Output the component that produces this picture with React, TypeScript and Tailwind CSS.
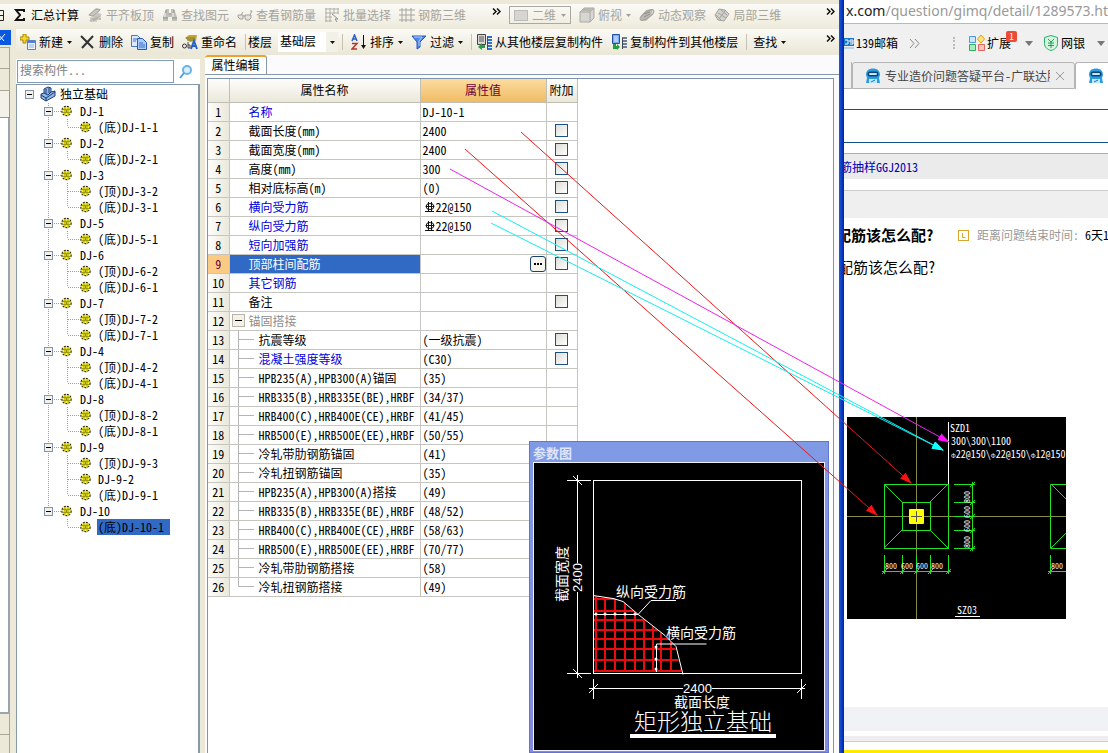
import { ReactNode } from "react";
import clsx from "clsx";

type TreeLeaf = string;
type TreeGroup = { name: string; children: TreeLeaf[] };

const TREE: TreeGroup[] = [
  { name: "DJ-1", children: ["(底)DJ-1-1"] },
  { name: "DJ-2", children: ["(底)DJ-2-1"] },
  { name: "DJ-3", children: ["(顶)DJ-3-2", "(底)DJ-3-1"] },
  { name: "DJ-5", children: ["(底)DJ-5-1"] },
  { name: "DJ-6", children: ["(顶)DJ-6-2", "(底)DJ-6-1"] },
  { name: "DJ-7", children: ["(顶)DJ-7-2", "(底)DJ-7-1"] },
  { name: "DJ-4", children: ["(顶)DJ-4-2", "(底)DJ-4-1"] },
  { name: "DJ-8", children: ["(顶)DJ-8-2", "(底)DJ-8-1"] },
  { name: "DJ-9", children: ["(顶)DJ-9-3", "DJ-9-2", "(底)DJ-9-1"] },
  { name: "DJ-10", children: ["(底)DJ-10-1"] },
];
const SELECTED_LEAF = "(底)DJ-10-1";

type PropertyRow = {
  name: string;
  value?: string;
  rebar?: boolean;
  blue?: boolean;
  check?: boolean;
  group?: boolean;
  nested?: boolean;
};

const ROWS: PropertyRow[] = [
  { name: "名称", value: "DJ-10-1", blue: true },
  { name: "截面长度(mm)", value: "2400", check: true },
  { name: "截面宽度(mm)", value: "2400", check: true },
  { name: "高度(mm)", value: "300", check: true },
  { name: "相对底标高(m)", value: "(0)", check: true },
  { name: "横向受力筋", value: "22@150", rebar: true, blue: true, check: true },
  { name: "纵向受力筋", value: "22@150", rebar: true, blue: true, check: true },
  { name: "短向加强筋", blue: true, check: true },
  { name: "顶部柱间配筋", blue: true, check: true },
  { name: "其它钢筋", blue: true },
  { name: "备注", check: true },
  { name: "锚固搭接", group: true },
  { name: "抗震等级", value: "(一级抗震)", nested: true, check: true },
  { name: "混凝土强度等级", value: "(C30)", nested: true, blue: true, check: true },
  { name: "HPB235(A),HPB300(A)锚固", value: "(35)", nested: true },
  { name: "HRB335(B),HRB335E(BE),HRBF", value: "(34/37)", nested: true },
  { name: "HRB400(C),HRB400E(CE),HRBF", value: "(41/45)", nested: true },
  { name: "HRB500(E),HRB500E(EE),HRBF", value: "(50/55)", nested: true },
  { name: "冷轧带肋钢筋锚固", value: "(41)", nested: true },
  { name: "冷轧扭钢筋锚固", value: "(35)", nested: true },
  { name: "HPB235(A),HPB300(A)搭接", value: "(49)", nested: true },
  { name: "HRB335(B),HRB335E(BE),HRBF", value: "(48/52)", nested: true },
  { name: "HRB400(C),HRB400E(CE),HRBF", value: "(58/63)", nested: true },
  { name: "HRB500(E),HRB500E(EE),HRBF", value: "(70/77)", nested: true },
  { name: "冷轧带肋钢筋搭接", value: "(58)", nested: true },
  { name: "冷轧扭钢筋搭接", value: "(49)", nested: true },
];
const SELECTED_ROW = 8;

function Icon({ children }: { children: ReactNode }) {
  return (
    <svg width="16" height="16" viewBox="0 0 16 16" fill="none" className="shrink-0" aria-hidden="true">
      {children}
    </svg>
  );
}

const SlabIcon = () => (
  <Icon>
    <path d="M1 8 9 1l5 1-3 4 4 1-8 8-5-1 4-4z" fill="#c9c8c1" />
    <path d="M2 8l7-6 4 1-7 6zM5 12h9M6 14l7-5" stroke="#a6a59e" />
    <path d="M4 10v5M9 9v6M13 8v5" stroke="#b4b3ac" />
  </Icon>
);
const BinocularsIcon = () => (
  <Icon>
    <path d="M4 2h3v4h2V2h3l3 8v4h-5v-4H6v4H1v-4z" fill="#bfbeb8" />
    <path d="M4 3v3M12 3v3M1 11h5M10 11h5M7 7h2" stroke="#94938d" />
    <path d="M3 6v4M11 6v4" stroke="#f4f3ee" />
  </Icon>
);
const GlassesIcon = () => (
  <Icon>
    <path d="M1 8h5v4H3l-2-2zM8 8h6v3l-2 2H9l-1-2z" fill="#e3e2dc" stroke="#a3a29c" />
    <path d="M6 9h2M13 8l2-4h-2M4 8l2-3" stroke="#a3a29c" />
  </Icon>
);
const BatchIcon = () => (
  <Icon>
    <path d="M1 2h14M1 6h14M1 10h7M1 14h7M2 1v14M6 1v14M10 1v6M14 1v6" stroke="#b0afa8" />
    <path d="M8 7l6 5-3 0 2 3" stroke="#8f8e88" />
  </Icon>
);
const GridIcon = () => (
  <Icon>
    <path d="M0 3h16M0 8h16M0 13h16M3 1v14M7 1v14M12 1v14" stroke="#a5a49e" />
  </Icon>
);
const CubeIcon = () => (
  <Icon>
    <path d="M1 5l4-4h10v10l-4 4H1z" fill="#d7d6d0" stroke="#a9a8a2" />
    <path d="M1 5h10v10M11 5l4-4" stroke="#a9a8a2" />
    <path d="M2 4l3-3h9l-3 3z" fill="#b7b6b0" />
  </Icon>
);
const OrbitIcon = () => (
  <Icon>
    <path d="M2 9l5-6 7-1-2 7-5 5-5-1z" fill="#bbbab4" />
    <ellipse cx="8" cy="8" rx="8" ry="3" transform="rotate(-35 8 8)" stroke="#a2a19b" />
    <path d="M5 7l6-2M5 10l6-3" stroke="#8f8e88" />
  </Icon>
);
const PartIcon = () => (
  <Icon>
    <path d="M1 8l4-6 6 1 4 4-5 7-6-1z" fill="#d2d1cb" stroke="#a4a39d" />
    <path d="M4 6l8 5M7 3l6 5M5 12l6-8M2 8l5 5" stroke="#a4a39d" />
  </Icon>
);
const NewIcon = () => (
  <Icon>
    <path d="M3 0h3v3h3v3H6v3H3V6H0V3h3z" fill="#f7d62c" stroke="#a98508" />
    <path d="M7.500 6.500h8v9h-8z" fill="#eaf3ff" stroke="#5b7fc0" />
    <path d="M8 7h7v2H8z" fill="#4f7fe0" />
    <path d="M9 11h5M9 13h5" stroke="#8fb0e4" />
  </Icon>
);
const DeleteIcon = () => (
  <Icon>
    <path d="M1 2l12 12M13 2L2 14" stroke="#333" strokeWidth="2" />
  </Icon>
);
const CopyIcon = () => (
  <Icon>
    <path d="M.5 1.500h6l3 3v8h-9z" fill="#dceaff" stroke="#4b74c4" />
    <path d="M6.500 4.500h5l4 4v7h-9z" fill="#a9ccff" stroke="#2c58b4" />
    <path d="M2 5h4M2 7h3M8 9h4M8 11h6M8 13h6" stroke="#3f6cc0" />
  </Icon>
);
const RenameIcon = () => (
  <Icon>
    <path d="M3 4l4-3h8l-1 6-6 1z" fill="#c9a13b" />
    <path d="M4 4h9M5 6h8" stroke="#6f8a36" />
    <circle cx="2.500" cy="12" r="2" stroke="#333" />
    <path d="M6 8v6h2v-3H6" stroke="#444" />
    <path d="M9 15l3-8 3 8M10 12h4" stroke="#2560c8" strokeWidth="2" />
  </Icon>
);
const SortIcon = () => (
  <Icon>
    <path d="M1 7l2.500-6L6 7M2 5h3" stroke="#2a5fc4" strokeWidth="1.500" />
    <path d="M1 9.500h5L1 15h5" stroke="#b3362c" strokeWidth="1.500" />
    <path d="M12.500 1v13" stroke="#111" />
    <path d="M10 11h5l-2.500 4z" fill="#111" />
  </Icon>
);
const FilterIcon = () => (
  <Icon>
    <path d="M1 2h14l-6 6v5l-3 2V8z" fill="#4d86ea" stroke="#2b59c0" />
    <path d="M3 3h8L8 7v5" stroke="#b7d2ff" />
  </Icon>
);
const CopyFromIcon = () => (
  <Icon>
    <path d="M1.500.5h8v10h-8z" fill="#d9d9d9" stroke="#444" />
    <path d="M3 3h5M3 5h5M3 7h5" stroke="#555" />
    <path d="M2 13l4-4v2h3v3H6v2z" fill="#27a043" />
    <path d="M11 3h5M11 6h5M11 9h5M11 12h5M11 15h5" stroke="#2f71cc" strokeWidth="2" />
    <path d="M11.500 3v12" stroke="#1c4f9c" />
  </Icon>
);
const CopyToIcon = () => (
  <Icon>
    <path d="M1.500.5h7v9h-7z" fill="#78a9f2" stroke="#2350a8" />
    <path d="M3 3h4M3 5h4M3 7h4" stroke="#e8f1ff" />
    <path d="M2 10v5h4v1l3-3-3-3v2H5v-2z" fill="#21a03e" />
    <path d="M11 4h5M11 7h5M11 10h5M11 13h5" stroke="#6f7f97" strokeWidth="2" />
    <path d="M11.500 4v11" stroke="#3a465a" />
  </Icon>
);

function Caret({ muted }: { muted?: boolean }) {
  return (
    <svg width="5" height="3" viewBox="0 0 5 3" className="ml-px shrink-0" aria-hidden="true">
      <path d="M0 0h5L2.500 3z" fill={muted ? "#a0a09a" : "#111"} />
    </svg>
  );
}

type ToolButtonProps = {
  icon?: ReactNode;
  label: string;
  disabled?: boolean;
  caret?: boolean;
};
function ToolButton({ icon, label, disabled, caret }: ToolButtonProps) {
  return (
    <button
      type="button"
      disabled={disabled}
      className="flex shrink-0 items-center gap-[3px] whitespace-nowrap text-black disabled:text-[#a5a49d]"
    >
      {icon}
      {label}
      {caret && <Caret muted={disabled} />}
    </button>
  );
}

const Separator = () => <span className="h-4 w-px shrink-0 bg-[#c5c2b4]" />;

function Overflow({ className }: { className?: string }) {
  return (
    <button type="button" aria-label="更多" className={clsx("shrink-0", className)}>
      <svg width="9" height="7" viewBox="0 0 9 7" fill="none" aria-hidden="true">
        <path d="M1 .5l3 3-3 3M5 .5l3 3-3 3" stroke="#111" strokeWidth="1.500" />
      </svg>
    </button>
  );
}

function MainToolbar() {
  return (
    <div className="flex h-7 items-center gap-2 overflow-hidden border-t-4 border-[#ece9d8] bg-linear-to-b from-[#fbfaf6] to-[#eeebdd] pb-[2px] pr-1">
      <svg width="4" height="11" viewBox="0 0 4 11" fill="none" aria-hidden="true">
        <path d="M0 .5h3.500v10H0M0 5.500h3" stroke="#222" />
      </svg>
      <ToolButton
        icon={
          <Icon>
            <path d="M12 5V3H4l4 5-4 5h8v-2" stroke="#111" strokeWidth="2" />
          </Icon>
        }
        label="汇总计算"
      />
      <ToolButton icon={<SlabIcon />} label="平齐板顶" disabled />
      <ToolButton icon={<BinocularsIcon />} label="查找图元" disabled />
      <ToolButton icon={<GlassesIcon />} label="查看钢筋量" disabled />
      <ToolButton icon={<BatchIcon />} label="批量选择" disabled />
      <ToolButton icon={<GridIcon />} label="钢筋三维" disabled />
      <Overflow className="ml-[18px] pb-2" />
      <button
        type="button"
        disabled
        className="flex h-[18px] w-[62px] shrink-0 items-center justify-between border border-[#aaa99f] px-1 text-[#a5a49d]"
      >
        <span className="h-[11px] w-[14px] border border-[#bbb] bg-[#d6d5cf]" />
        二维
        <Caret muted />
      </button>
      <ToolButton icon={<CubeIcon />} label="俯视" disabled caret />
      <ToolButton icon={<OrbitIcon />} label="动态观察" disabled />
      <ToolButton icon={<PartIcon />} label="局部三维" disabled />
      <Overflow className="ml-auto pb-2" />
    </div>
  );
}

function ComponentToolbar() {
  return (
    <div className="flex h-[26px] shrink-0 items-center gap-2 overflow-hidden bg-linear-to-b from-[#fbfaf6] to-[#eae7d6] pl-1 pr-1">
      <ToolButton icon={<NewIcon />} label="新建" caret />
      <ToolButton icon={<DeleteIcon />} label="删除" />
      <ToolButton icon={<CopyIcon />} label="复制" />
      <ToolButton icon={<RenameIcon />} label="重命名" />
      <div className="flex shrink-0 items-center gap-[2px]">
        <Separator />
        <label htmlFor="floor">楼层</label>
        <div className="relative ml-1 flex items-center">
          <select id="floor" className="h-5 w-[60px] appearance-none bg-white pl-[2px] pb-[2px] outline-none">
            <option>基础层</option>
          </select>
          <span className="pointer-events-none absolute right-0 flex h-5 w-3 items-center bg-[#f3f1e7] pl-[3px]">
            <Caret />
          </span>
        </div>
        <span className="ml-[2px] flex">
          <Separator />
        </span>
      </div>
      <ToolButton icon={<SortIcon />} label="排序" caret />
      <ToolButton icon={<FilterIcon />} label="过滤" caret />
      <div className="flex shrink-0 items-center gap-1">
        <Separator />
        <ToolButton icon={<CopyFromIcon />} label="从其他楼层复制构件" />
      </div>
      <ToolButton icon={<CopyToIcon />} label="复制构件到其他楼层" />
      <div className="flex shrink-0 items-center gap-[6px]">
        <Separator />
        <ToolButton label="查找" caret />
      </div>
      <Overflow className="ml-auto pb-2" />
    </div>
  );
}

function GearIcon() {
  return (
    <svg width="11" height="12" viewBox="0 0 11 12" fill="none" className="shrink-0" aria-hidden="true">
      <circle cx="5.500" cy="6" r="4.500" stroke="#2e2c00" strokeWidth="1.500" strokeDasharray="2 1" />
      <circle cx="5.500" cy="6" r="4" fill="#f4f020" />
      <path d="M4 2.500v7M7 2.500v7M2 4.500h7M2 7.500h7" stroke="#85800a" strokeWidth=".7" />
      <path d="M5 5.500h1v1H5z" fill="#222" />
    </svg>
  );
}

function ToggleBox({ x, y }: { x: number; y: number }) {
  return (
    <g>
      <rect x={x + 0.5} y={y + 0.5} width="8" height="8" fill="#f3f1ec" stroke="#8494a6" />
      <path d={`M${x + 2} ${y + 4.5}h5`} stroke="#000" />
    </g>
  );
}

function ComponentTree() {
  return (
    <ul className="flex-1 overflow-hidden border-l border-t border-r-2 border-[#8798a6] bg-white">
      <li>
        <div className="flex h-[18px] items-center pl-2">
          <svg width="9" height="9" aria-hidden="true">
            <ToggleBox x={0} y={0} />
          </svg>
          <svg width="16" height="16" viewBox="0 0 16 16" fill="none" className="ml-[6px]" aria-hidden="true">
            <path d="M1 8l3-1V3l4-2 3 1v4l4-1v5l-9 5-5-3z" fill="#8fb7e8" stroke="#1d3c74" />
            <path d="M4 7l4 2 3-3M6 3v5M1 9l5 3 9-6M6 12v3M9 2v5" stroke="#1d3c74" />
          </svg>
          <span className="ml-1">独立基础</span>
        </div>
        <ul>
          {TREE.map((group, g) => {
            const lastGroup = g === TREE.length - 1;
            return (
              <li key={group.name}>
                <div className="flex h-4 items-center pl-5">
                  <svg width="24" height="16" fill="none" aria-hidden="true">
                    <path
                      d={lastGroup ? "M11.500 0v8M17 8.500h7" : "M11.500 0v16M17 8.500h7"}
                      stroke="#a0a0a0"
                      strokeDasharray="1 1"
                    />
                    <ToggleBox x={7} y={4} />
                  </svg>
                  <GearIcon />
                  <span className="ml-2">{group.name}</span>
                </div>
                <ul>
                  {group.children.map((leaf, i) => (
                    <li key={leaf} className="flex h-4 items-center pl-5">
                      <svg width="43" height="16" fill="none" aria-hidden="true">
                        <path
                          d={clsx(
                            !lastGroup && "M11.500 0v16",
                            i === group.children.length - 1 ? "M30.500 0v8" : "M30.500 0v16",
                            "M31 8.500h11"
                          )}
                          stroke="#a0a0a0"
                          strokeDasharray="1 1"
                        />
                      </svg>
                      <GearIcon />
                      <span
                        className={clsx(
                          "ml-[6px] h-4 pl-px",
                          leaf === SELECTED_LEAF && "bg-[#316ac5] pr-[6px]"
                        )}
                      >
                        {leaf}
                      </span>
                    </li>
                  ))}
                </ul>
              </li>
            );
          })}
        </ul>
      </li>
    </ul>
  );
}

function RebarMark() {
  return (
    <svg width="12" height="12" viewBox="0 0 12 12" fill="none" className="ml-px shrink-0" aria-label="三级钢">
      <ellipse cx="6" cy="5.500" rx="4" ry="3" stroke="#111" />
      <path d="M4.500 1v9M7.500 1v9M1 10.500h9M2 5.500h8" stroke="#111" />
    </svg>
  );
}

function NameCell({ row, last }: { row: PropertyRow; last: boolean }) {
  if (row.group) {
    return (
      <div className="flex h-[18px] items-center pl-[2px]">
        <button
          type="button"
          aria-label="折叠"
          className="flex h-[13px] w-[13px] items-center justify-center border border-[#b8b5a8] bg-[#f4f2e8]"
        >
          <span className="h-px w-[7px] bg-black" />
        </button>
        <span className="ml-1 text-[#8d8d8d]">{row.name}</span>
      </div>
    );
  }
  return (
    <div className={clsx("flex h-[18px] items-center overflow-hidden whitespace-nowrap", !row.nested && "pl-[19px]")}>
      {row.nested && (
        <svg width="29" height="19" fill="none" className="shrink-0" aria-hidden="true">
          <path d={last ? "M8.500 0v10M8 9.500h16" : "M8.500 0v19M8 9.500h16"} stroke="#b5b5b5" />
        </svg>
      )}
      {row.name}
    </div>
  );
}

function PropertyTable() {
  return (
    <table className="w-[369px] table-fixed border-collapse">
      <colgroup>
        <col className="w-[21px]" />
        <col className="w-[191px]" />
        <col className="w-[126px]" />
        <col className="w-[31px]" />
      </colgroup>
      <thead>
        <tr className="h-[23px] bg-linear-to-b from-[#fdfdfa] to-[#ebe8da]">
          <th className="border-b border-r border-[#c0bfb6]" />
          <th className="border-b border-r border-[#c0bfb6] p-0 font-normal">属性名称</th>
          <th className="border-b border-r border-[#c0bfb6] bg-linear-to-b from-[#fbdc9f] to-[#f0bb62] p-0 font-normal text-[#6e0038]">
            属性值
          </th>
          <th className="whitespace-nowrap border-b border-r border-[#c0bfb6] p-0 font-normal">附加</th>
        </tr>
      </thead>
      <tbody>
        {ROWS.map((row, i) => {
          const selected = i === SELECTED_ROW;
          return (
            <tr key={i} className="h-[19px]">
              <td
                className={clsx(
                  "border-b border-r border-[#c6c5c0] p-0 text-center",
                  selected
                    ? "bg-[#fbcb84] text-[#6e0038]"
                    : "bg-linear-to-r from-[#fdfdfb] to-[#ebe8da]"
                )}
              >
                {i + 1}
              </td>
              <td
                className={clsx(
                  "border-b border-r border-[#c6c5c0] p-0",
                  selected ? "bg-[#316ac5] text-white" : row.blue && "text-[#0000d8]"
                )}
              >
                <NameCell row={row} last={i === ROWS.length - 1} />
              </td>
              <td className="border-b border-r border-[#c6c5c0] p-0">
                <div className="flex h-[18px] items-center pl-[2px]">
                  {row.rebar && <RebarMark />}
                  {row.value}
                  {selected && (
                    <button
                      type="button"
                      aria-label="编辑"
                      className="ml-auto flex h-4 w-4 items-center justify-center gap-px rounded-[3px] border border-[#1c3f6e] bg-[#f6f5f0]"
                    >
                      <span className="h-[2px] w-[2px] bg-black" />
                      <span className="h-[2px] w-[2px] bg-black" />
                      <span className="h-[2px] w-[2px] bg-black" />
                    </button>
                  )}
                </div>
              </td>
              <td className="border-b border-r border-[#c6c5c0] p-0">
                {row.check && (
                  <input
                    type="checkbox"
                    aria-label={`附加 ${row.name}`}
                    className="mx-auto block h-[13px] w-[13px] appearance-none border border-[#1c5180] bg-linear-to-br from-[#dcdcd7] to-white"
                  />
                )}
              </td>
            </tr>
          );
        })}
      </tbody>
    </table>
  );
}

// rebar mesh clipped by the break line of the footing
function FootingDrawing() {
  const columns = [62, 71, 81, 91, 101, 110, 119, 127, 137, 147];
  const rows = [136, 148, 157, 167, 176, 186, 197, 208];
  return (
    <svg
      width="290"
      height="287"
      viewBox="0 0 290 287"
      fill="none"
      className="[font-family:'Noto_Sans_CJK_SC',sans-serif]"
    >
      <rect width="290" height="287" fill="#000" />
      <clipPath id="mesh">
        <path d="M59 133l20 2 10 3 14 13 28 22 10 10 7 29H59z" />
      </clipPath>
      <g stroke="#e80c0c" strokeWidth="2" clipPath="url(#mesh)">
        {columns.map((x) => (
          <path key={x} d={`M${x} 132v77`} />
        ))}
        {rows.map((y) => (
          <path key={y} d={`M60 ${y}h90`} />
        ))}
      </g>
      <g stroke="#fff">
        <rect x="59.500" y="17.500" width="208" height="193" />
        <path d="M59 132.500l20 3 10 3 14 12 28 22 11 11 7 28" />
        <path d="M33 17.500h24M33 210.500h24M43.500 12v88M43.500 129v86M39 13l9 9M39 206l9 9" />
        <path d="M59.500 216v20M267.500 216v20M55 225.500h94M178 225.500h93M55 230l9-9M263 230l9-9" />
        <path d="M59 151.500h45l13-14h25M122.500 209v-28h50" />
      </g>
      <g fill="#fff">
        {[62, 71, 81, 91, 101].map((x) => (
          <circle key={x} cx={x} cy="151" r="1.500" />
        ))}
        <circle cx="122" cy="184" r="1.500" />
        <circle cx="122" cy="196" r="1.500" />
        <circle cx="122" cy="206" r="1.500" />
        <text x="82" y="134" fontSize="14">纵向受力筋</text>
        <text x="132" y="175" fontSize="14">横向受力筋</text>
        <text x="149" y="230" fontSize="13" className="[font-family:'Liberation_Sans',sans-serif]">2400</text>
        <text x="140" y="244" fontSize="14">截面长度</text>
        <text x="100" y="267" fontSize="23" fontWeight="300">矩形独立基础</text>
        <text transform="translate(33 139) rotate(-90)" fontSize="14">截面宽度</text>
        <text
          transform="translate(48 129) rotate(-90)"
          fontSize="13"
          className="[font-family:'Liberation_Sans',sans-serif]"
        >
          2400
        </text>
        <rect x="96" y="271" width="146" height="4" />
      </g>
    </svg>
  );
}

function ParameterWindow() {
  return (
    <section className="absolute bottom-0 right-[10px] flex w-[300px] flex-col bg-linear-to-b from-[#7f9ae6] to-[#8389dc] px-1 pb-[2px] shadow-[inset_0_0_0_1px_#6673cf]">
      <h2 className="h-[21px] pt-1 text-[13px] font-bold leading-4 text-[#dfe6fb]">参数图</h2>
      <div className="border border-[#f0f0ff]">
        <FootingDrawing />
      </div>
    </section>
  );
}

function LeftDock() {
  return (
    <div className="flex w-4 shrink-0 flex-col bg-[#ece9d8] pr-1">
      <button type="button" aria-label="关闭" className="mt-[2px] h-[15px] w-[11px] bg-[#0a57e0]">
        <svg width="11" height="15" viewBox="0 0 11 15" fill="none" aria-hidden="true">
          <path d="M-2 4l6 7M5 4l-6 7" stroke="#fff" />
        </svg>
      </button>
      <div className="mt-[2px] h-[22px] w-[10px] border-b border-r border-t border-[#a9a798]" />
      <div className="h-[22px] w-[10px] border-b border-r border-[#a9a798]" />
      <div className="h-[27px] w-[10px] border-b border-r border-[#8798a6] bg-[#f3f1e8]" />
      <div className="w-[10px] flex-1 border-b-2 border-r-2 border-[#9aa5ae] bg-white" />
      <div className="h-[21px] w-[10px] border-b border-r border-[#a9a798]" />
      <div className="h-[18px] w-[10px] border-r border-[#a9a798]" />
    </div>
  );
}

function CadApp() {
  return (
    <main className="flex min-w-0 flex-1 flex-col bg-[#ece9d8]">
      <MainToolbar />
      <div className="flex min-h-0 flex-1">
        <LeftDock />
        <div className="flex min-w-0 flex-1 flex-col pt-px">
          <ComponentToolbar />
          <div className="flex min-h-0 flex-1 gap-[5px]">
            <div className="flex w-[184px] shrink-0 flex-col pt-1">
              <div className="flex h-[25px] bg-white p-px">
                <input
                  aria-label="搜索构件"
                  placeholder="搜索构件..."
                  className="h-[23px] w-[157px] border border-[#7f9db9] bg-white pl-[2px] pb-1 outline-none placeholder:text-[#808080]"
                />
                <button type="button" aria-label="搜索" className="ml-1 flex items-center">
                  <svg width="16" height="16" viewBox="0 0 16 16" fill="none" aria-hidden="true">
                    <circle cx="9" cy="6" r="4" fill="#d9f0ff" stroke="#69b4ea" strokeWidth="2" />
                    <path d="M6 9l-4 5" stroke="#4f9fe0" strokeWidth="2" />
                  </svg>
                </button>
              </div>
              <ComponentTree />
            </div>
            <div className="relative flex min-w-0 flex-1 flex-col bg-[#fbfafd]">
              <div className="flex h-5 items-end border-b border-[#8798a6]">
                <button
                  type="button"
                  className="h-[19px] w-[62px] rounded-t-[3px] border-r border-t-2 border-[#8798a6] border-t-[#f0a02c] bg-white pb-[2px] text-center"
                >
                  属性编辑
                </button>
              </div>
              <div className="ml-[2px] mr-[5px] mt-[3px] flex-1 border-l border-r border-t border-[#7f93ad] bg-white">
                <PropertyTable />
              </div>
              <ParameterWindow />
            </div>
          </div>
        </div>
      </div>
    </main>
  );
}

function RobotIcon() {
  return (
    <svg width="16" height="16" viewBox="0 0 16 16" fill="none" className="shrink-0" aria-hidden="true">
      <path d="M1 7c0-4.500 3-6.500 7-6.500S15 2.500 15 7l-1 3 1 5H1l1-5z" fill="#2a9be0" />
      <rect x="2.500" y="3.500" width="11" height="5" rx="2.500" fill="#10436e" />
      <rect x="4" y="5" width="8" height="2" rx="1" fill="#bfe6ff" />
      <path d="M4 11h8v4H4z" fill="#bfe8ff" />
      <path d="M6 14l4-2" stroke="#1574b8" />
    </svg>
  );
}

function GrayCaret() {
  return (
    <svg width="8" height="5" viewBox="0 0 8 5" className="shrink-0" aria-hidden="true">
      <path d="M0 0h8L4 5z" fill="#777" />
    </svg>
  );
}

function FootingPlan() {
  return (
    <svg
      width="219"
      height="202"
      viewBox="0 0 219 202"
      fill="none"
      className="ml-[3px] [font-family:'Noto_Sans_Mono_CJK_SC','Noto_Sans_CJK_SC',sans-serif]"
    >
      <rect width="219" height="202" fill="#000" />
      <path d="M69.500 0v202M0 99.500h219" stroke="#8a8a4a" />
      <g stroke="#22e022">
        <rect x="37.500" y="67.500" width="64" height="64" />
        <rect x="55.500" y="85.500" width="28" height="28" />
        <path d="M37 67l18 18M101 67L83 85M37 131l18-18M101 131l-18-18" />
        <path d="M107 67.500h21M107 85.500h21M107 99.500h21M107 113.500h21M107 131.500h21M125.500 65v69" />
        <path d="M37.500 138v19M55.500 138v19M69.500 138v19M83.500 138v19M101.500 138v19M35 154.500h69" />
        <path d="M123 70l5-5M123 88l5-5M123 102l5-5M123 116l5-5M123 134l5-5" />
        <path d="M35 157l5-5M53 157l5-5M67 157l5-5M81 157l5-5M99 157l5-5M201 157l5-5" />
        <path d="M219 67.500h-15.500v64H219M204 67l15 15M204 131l15-15M203.500 138v19M201 154.500h18" />
      </g>
      <rect x="62" y="92" width="15" height="15" rx="1" fill="#ff0" />
      <path d="M69.500 94v11M64 99.500h11" stroke="#555" />
      <path d="M101.500 5v62M108 199.500h25" stroke="#fff" />
      <g fill="#fff">
        <g fontSize="10">
          <text x="103" y="15">SZD1</text>
          <text x="104" y="28">300\300\1100</text>
          <text x="104" y="41">
            <tspan fontSize="6">Φ</tspan>22@150\<tspan fontSize="6">Φ</tspan>22@150\<tspan fontSize="6">Φ</tspan>12@150
          </text>
          <text x="110" y="197">SZ03</text>
        </g>
        <g fontSize="8">
          <text x="38" y="152">800</text>
          <text x="54" y="152">600</text>
          <text x="69" y="152">600</text>
          <text x="84" y="152">800</text>
          <text x="204" y="152">800</text>
          <text transform="translate(123 86) rotate(-90)">800</text>
          <text transform="translate(123 101) rotate(-90)">600</text>
          <text transform="translate(123 115) rotate(-90)">600</text>
          <text transform="translate(123 131) rotate(-90)">800</text>
        </g>
      </g>
    </svg>
  );
}

function BrowserWindow() {
  return (
    <aside className="flex w-[264px] shrink-0 flex-col overflow-hidden whitespace-nowrap bg-white">
      <div className="h-6 border-b border-[#b9b9b9] pl-[2px] text-[14px] leading-[22px] text-[#999] [font-family:'Noto_Sans',sans-serif]">
        <span className="text-[#222]">x.com</span>/question/gimq/detail/1289573.htm
      </div>
      <div className="flex h-[38px] items-center bg-[#f0f0f0]">
        <svg width="10" height="12" viewBox="0 0 10 12" fill="none" aria-hidden="true">
          <path d="M0 1h10v8H0z" fill="#1676c8" />
          <path d="M1 3h3v4H1M6 7h3V3H6v2h3" stroke="#fff" />
          <path d="M0 11h10" stroke="#7db7e8" />
        </svg>
        <a href="#mail" className="ml-[2px]">139邮箱</a>
        <svg width="11" height="9" viewBox="0 0 11 9" fill="none" className="ml-[11px]" aria-hidden="true">
          <path d="M1 0l4 4.500L1 9M6 0l4 4.500L6 9" stroke="#888" />
        </svg>
        <span className="ml-[33px] h-3 border-l-2 border-dotted border-[#bbb]" />
        <svg width="16" height="16" viewBox="0 0 16 16" fill="none" className="ml-[14px]" aria-hidden="true">
          <path d="M.5 1.500h6v6h-6z" fill="#cfe6ff" stroke="#4f97dc" />
          <path d="M12 0l3.500 4L12 8 8.500 4z" fill="#ffe08a" stroke="#e8a000" />
          <path d="M.5 9.500h6v6h-6z" fill="#a9ecc0" stroke="#2fae5f" />
          <path d="M9.500 9.500h6v6h-6z" fill="#ffc3bd" stroke="#e2665c" />
        </svg>
        <a href="#extensions" className="relative ml-[2px]">
          扩展
          <span className="absolute -right-[6px] -top-[4px] h-[11px] w-[11px] rounded-[2px] bg-[#ee4b36] text-center text-[9px] leading-[11px] text-white">
            1
          </span>
        </a>
        <span className="ml-[14px]"><GrayCaret /></span>
        <svg width="16" height="16" viewBox="0 0 16 16" fill="none" className="ml-[10px]" aria-hidden="true">
          <path d="M8 .5l6.500 2v6c0 4-3 6-6.500 7-3.500-1-6.500-3-6.500-7v-6z" fill="#d5f5e0" stroke="#2fae6a" />
          <path d="M5 4l3 3 3-3M8 7v6M5 8h6M5 10.500h6" stroke="#1f9f58" />
        </svg>
        <a href="#bank" className="ml-[2px]">网银</a>
        <span className="ml-3"><GrayCaret /></span>
      </div>
      <div className="flex h-[27px] shrink-0 bg-[#f0f0f0]">
        <div className="w-2 shrink-0 border-b border-r border-[#b5b5b5]" />
        <div className="flex w-[223px] shrink-0 items-center rounded-t-[3px] border border-[#b5b5b5] bg-[#ededed] pl-3 text-[#444]">
          <RobotIcon />
          <a href="#platform" className="ml-1 w-[165px] overflow-hidden">专业造价问题答疑平台-广联达服</a>
          <button type="button" aria-label="关闭标签" className="ml-[6px]">
            <svg width="8" height="8" viewBox="0 0 8 8" fill="none" aria-hidden="true">
              <path d="M0 0l8 8M8 0L0 8" stroke="#999" />
            </svg>
          </button>
        </div>
        <div className="flex w-10 shrink-0 items-center rounded-tl-[3px] border-l border-t border-[#b5b5b5] bg-white pl-3">
          <RobotIcon />
        </div>
      </div>
      <div className="mt-5 h-[34px] shrink-0 border-b border-t border-[#14508c]" />
      <div className="mt-[10px] flex h-[26px] shrink-0 items-center border-t border-[#9fb2bd] bg-[#ebebeb]">
        <a href="#ggj" className="-ml-1 text-[#0000b4]">筋抽样GGJ2013</a>
      </div>
      <div className="mt-[11px] h-7 shrink-0 border-t border-[#ccc] bg-[#efefef]" />
      <div className="mt-[5px] flex h-6 shrink-0 items-center">
        <h1 className="-ml-2 w-[122px] shrink-0 text-[15px] font-bold leading-6">配筋该怎么配?</h1>
        <svg width="11" height="11" viewBox="0 0 11 11" fill="none" className="shrink-0" aria-hidden="true">
          <rect x=".5" y=".5" width="10" height="10" stroke="#d9a62e" />
          <path d="M4.500 3v4.500h3" stroke="#d9a62e" />
        </svg>
        <span className="ml-2 text-[#999]">距离问题结束时间:</span>
        <span className="ml-[6px]">6天1</span>
      </div>
      <p className="-ml-[6px] mt-2 text-[15px] leading-6">配筋该怎么配?</p>
      <div className="mt-[138px]">
        <FootingPlan />
      </div>
      <div className="mt-auto h-6 shrink-0 bg-[#f1f2f4]" />
      <div className="mt-[5px] h-[6px] shrink-0 border-b border-[#ccc] bg-[#eee]" />
      <div className="mt-2 h-[3px] shrink-0 bg-[#ffea00]" />
    </aside>
  );
}

// arrows drawn across both windows, linking the property values to the plan
function Annotations() {
  const heads = [
    { id: "red", color: "#ff1010" },
    { id: "magenta", color: "#ff10ff" },
    { id: "cyan", color: "#10ffff" },
  ];
  return (
    <svg width="1108" height="753" fill="none" className="pointer-events-none absolute left-0 top-0" aria-hidden="true">
      <defs>
        {heads.map((h) => (
          <marker
            key={h.id}
            id={h.id}
            markerWidth="12"
            markerHeight="8"
            refX="11"
            refY="4"
            orient="auto"
            markerUnits="userSpaceOnUse"
          >
            <path d="M0 0l12 4-12 4z" fill={h.color} />
          </marker>
        ))}
      </defs>
      <path d="M521 132L911 483" stroke="#e81818" markerEnd="url(#red)" />
      <path d="M465 149L877 515" stroke="#e81818" markerEnd="url(#red)" />
      <path d="M450 169L949 442" stroke="#f020f0" markerEnd="url(#magenta)" />
      <path d="M492 211L943 450" stroke="#10f0f0" markerEnd="url(#cyan)" />
      <path d="M491 223L943 450" stroke="#10f0f0" markerEnd="url(#cyan)" />
    </svg>
  );
}

export default function App() {
  return (
    <div className="relative flex h-screen overflow-hidden text-[12px] leading-4 text-black [font-family:'Noto_Sans_Mono_CJK_SC','Noto_Sans_CJK_SC',sans-serif]">
      <CadApp />
      <div className="w-[5px] shrink-0 bg-linear-to-r from-[#1d5be0] to-[#0322a8]" />
      <BrowserWindow />
      <Annotations />
    </div>
  );
}
